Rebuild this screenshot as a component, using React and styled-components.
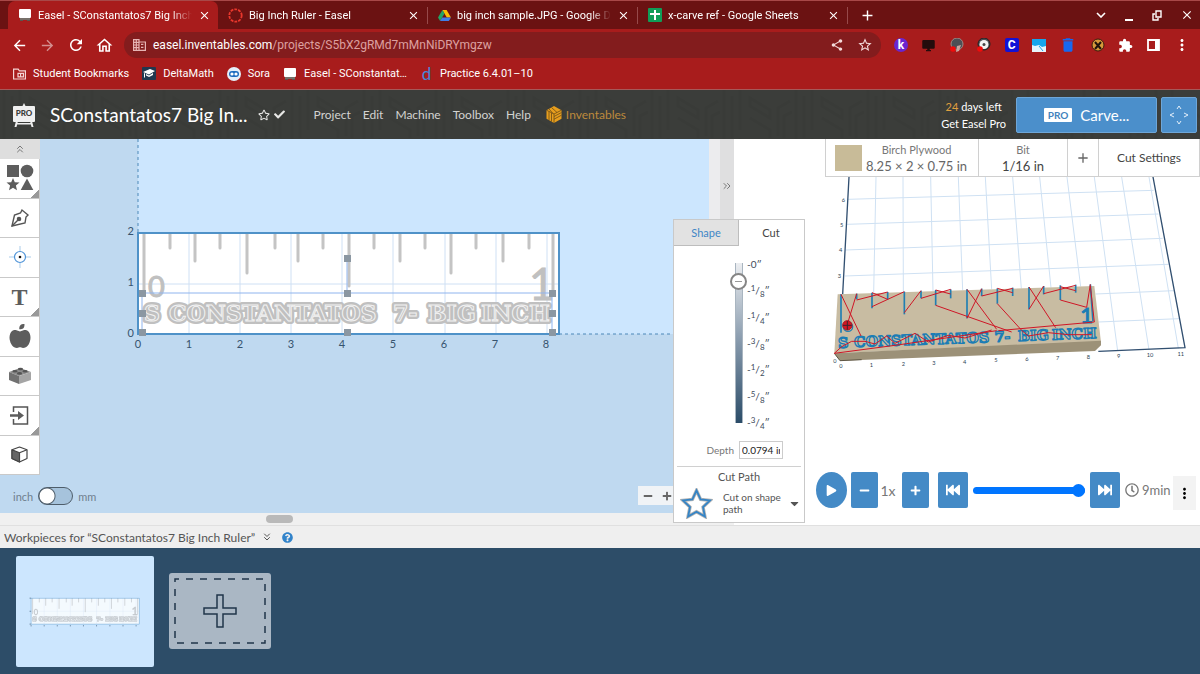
import React, { useId } from "react";
import styled, { createGlobalStyle, css } from "styled-components";
import { ChevronsDown, ChevronsRight, ChevronsUp } from "lucide-react";
import {
  MdAdd,
  MdArrowBack,
  MdArrowForward,
  MdClose,
  MdDelete,
  MdDesktopWindows,
  MdExtension,
  MdMoreVert,
  MdOutlineHome,
  MdRefresh,
  MdShare,
  MdStarBorder,
} from "react-icons/md";
import {
  FaAppleAlt,
  FaCaretDown,
  FaCheck,
  FaFastBackward,
  FaFastForward,
  FaMinus,
  FaPlay,
  FaPlus,
  FaQuestionCircle,
  FaRegClock,
  FaRegStar,
} from "react-icons/fa";

const GlobalStyle = createGlobalStyle`
  * {
    box-sizing: border-box;
  }

  body {
    margin: 0;
    background: #2d4d68;
    font-family: Lato, "Open Sans", sans-serif;
  }

  button {
    padding: 0;
    border: 0;
    background: none;
    color: inherit;
    font: inherit;
    cursor: pointer;
  }

  a {
    color: inherit;
    text-decoration: none;
  }

  svg {
    display: block;
    flex-shrink: 0;
  }
`;

/* ---------- small drawings ---------- */

const BoardIcon = () => (
  <svg width="14" height="14" viewBox="0 0 14 14">
    <path d="M2 11h10v2H9v-1H5v1H2z" fill="#5b5550" />
    <rect x="1" y="1" width="12" height="9" rx="1" fill="#fff" />
    <path d="M2 10h10v2H2z" fill="#77706a" />
  </svg>
);

const RingIcon = () => (
  <svg width="15" height="15" viewBox="0 0 15 15">
    <circle cx="7.5" cy="7.5" r="6.2" fill="none" stroke="#e8372c" strokeWidth="1.8" strokeDasharray="2.8 1.1" />
  </svg>
);

const DriveIcon = () => (
  <svg width="13" height="13" viewBox="0 0 13 13">
    <path d="M4.4 1h4.2L13 8.4H8.8z" fill="#fbbc05" />
    <path d="M4.4 1L0 8.4 2.1 12 6.5 4.6z" fill="#22a565" />
    <path d="M4.2 8.4H13L10.9 12H2.1z" fill="#3f7ee8" />
  </svg>
);

const SheetsIcon = () => (
  <svg width="14" height="14" viewBox="0 0 14 14">
    <rect width="14" height="14" rx="1" fill="#109d58" />
    <path d="M6 2h2v3h4v2H8v5H6V7H2V5h4z" fill="#fff" />
  </svg>
);

const BuildingIcon = () => (
  <svg width="13" height="12" viewBox="0 0 13 12" fill="none" stroke="#e6b4b4" strokeWidth="1.2">
    <path d="M.6.6H6v10.8H.6zM6 3h6.4v8.4H6M.6 3.4H6M.6 6H6M.6 8.6H6M3.3.6v10.8M8 5.4h2.4M8 8.4h2.4" />
  </svg>
);

const FolderIcon = () => (
  <svg width="13" height="12" viewBox="0 0 13 12" fill="none" stroke="#f3d4d4" strokeWidth="1.2">
    <path d="M.6 1.2h4.6l1.2 1.6h6v8.2H.6z" />
    <path d="M5 5.4h5.4v3.4H5zM7.6 5.4v3.4" />
  </svg>
);

const CapIcon = () => (
  <svg width="14" height="13" viewBox="0 0 14 13">
    <rect width="14" height="13" rx="1" fill="#20374f" />
    <path d="M1 5l7-3 5 2-6 3.4zM4 7l3 1.6L11 6v2L7 10 4 8.6zM2 6v4l1 1V6.4z" fill="#fff" />
  </svg>
);

const SoraIcon = () => (
  <svg width="14" height="14" viewBox="0 0 14 14">
    <circle cx="7" cy="7" r="7" fill="#e4effa" />
    <rect x="2" y="4" width="10" height="6" rx="3" fill="#1d6dc0" />
    <circle cx="5" cy="7" r="1.6" fill="#fff" />
    <circle cx="9" cy="7" r="1.6" fill="#fff" />
  </svg>
);

const RestoreIcon = () => (
  <svg width="10" height="11" viewBox="0 0 10 11" fill="none" stroke="#fff" strokeWidth="1.4">
    <path d="M4 1h5v6H4z" />
    <path d="M3 4H1v6h5V8" />
  </svg>
);

const SidePanelIcon = () => (
  <svg width="13" height="12" viewBox="0 0 13 12">
    <path d="M1 1h11v10H1z" fill="none" stroke="#fff" strokeWidth="1.8" />
    <path d="M8 1h4v10H8z" fill="#fff" />
  </svg>
);

const PlantIcon = ({ ring }) => (
  <svg width="14" height="14" viewBox="0 0 14 14">
    <circle cx="7" cy="6" r="6" fill="#4d4f55" stroke={ring ? "#222" : "#9a8a85"} />
    {ring ? (
      <>
        <circle cx="7" cy="6.5" r="4.5" fill="#f2f2f2" />
        <circle cx="7" cy="6.5" r="1.5" fill="#444" />
      </>
    ) : (
      <path d="M7 8l4-1-2 6-3 1z" fill="#c9a6a0" />
    )}
    <circle cx="3" cy="11" r="2.8" fill="#f10b0b" />
  </svg>
);

const PhotoIcon = () => (
  <svg width="14" height="13" viewBox="0 0 14 13">
    <rect width="14" height="13" fill="#e6f5fc" />
    <path d="M0 0h14v7l-4 1-3-2-4 1-3-1z" fill="#17a5ec" />
    <path d="M7 7l4 5" stroke="#17a5ec" />
  </svg>
);

const CrossBadgeIcon = () => (
  <svg width="14" height="14" viewBox="0 0 14 14">
    <circle cx="7" cy="7" r="6" fill="#d7993b" stroke="#3b1e0c" />
    <path d="M4 4l6 7M10 4l-6 7" stroke="#20130b" strokeWidth="2" />
  </svg>
);

const EaselLogo = () => (
  <svg width="24" height="24" viewBox="0 0 24 24">
    <path d="M12 0l2 4h-4zM4 18h2l-1.5 6h-2zM18 18h2l1.5 6h-2zM5 20h14v1.5H5z" fill="#eee" />
    <rect x="1" y="3" width="22" height="16" rx="1" fill="#f0f0f0" />
    <text x="12" y="13" textAnchor="middle" fontFamily="Lato, sans-serif" fontWeight="900" fontSize="8" fill="#3a3c39">
      PRO
    </text>
  </svg>
);

const InventablesLogo = () => (
  <svg width="16" height="17" viewBox="0 0 16 17">
    <path d="M8 0l7.5 4.2v8.5L8 17 .5 12.7V4.2z" fill="#e79e1d" />
    <path
      d="M8 8v9M8 8L.5 4.2M8 8l7.5-3.8M3 5.5v8.7M5.5 7v8.7M8 10.500l7.5-4M8 13.2l7.5-4M5.5 1.5l5.5 5M3 3l4 4.5"
      stroke="#6b4b18"
      strokeWidth=".8"
      fill="none"
    />
  </svg>
);

const ShapesIcon = () => (
  <svg width="28" height="28" viewBox="0 0 28 28" fill="#5d5d5d">
    <rect x="1" y="1" width="12" height="12" />
    <circle cx="21" cy="7" r="6.3" />
    <path d="M7 14l1.800 4.200 4.700.4-3.600 3 1.100 4.600L7 23.800 3 26.200l1.100-4.600-3.600-3 4.700-.4z" />
    <path d="M21 14.5L27.3 26H14.7z" />
  </svg>
);

const PenIcon = () => (
  <svg width="20" height="20" viewBox="0 0 20 20" fill="none" stroke="#555" strokeWidth="1.4">
    <path d="M2 18L4.5 7l6-2L12 2l6 5-2 2-1 6z" />
    <path d="M2 18l6-6" />
    <circle cx="9" cy="11" r="1.6" fill="#555" />
  </svg>
);

const TargetIcon = () => (
  <svg width="22" height="22" viewBox="0 0 22 22" fill="none">
    <path d="M11 0v5M11 17v5M0 11h5M17 11h5" stroke="#a9cbe9" />
    <circle cx="11" cy="11" r="5.5" stroke="#4f94d8" strokeWidth="1.2" />
    <circle cx="11" cy="11" r="1.3" fill="#111" />
  </svg>
);

const BrickIcon = () => (
  <svg width="22" height="17" viewBox="0 0 22 17">
    <path d="M0 5l11-4 11 4-12 4z" fill="#8d8d8d" />
    <path d="M0 5l10 4v8L0 13z" fill="#717171" />
    <path d="M10 9l12-4v8l-12 4z" fill="#a5a5a5" />
    <g fill="#555">
      <ellipse cx="6" cy="4.2" rx="2.6" ry="1.3" />
      <ellipse cx="11.5" cy="2" rx="2.6" ry="1.3" />
      <ellipse cx="16" cy="4.2" rx="2.6" ry="1.3" />
      <ellipse cx="10.5" cy="6.4" rx="2.6" ry="1.3" />
    </g>
  </svg>
);

const ImportIcon = () => (
  <svg width="19" height="19" viewBox="0 0 19 19">
    <path d="M3.5 6V1h14v17h-14v-5" fill="none" stroke="#555" strokeWidth="1.5" />
    <path d="M0 8.2h8V5l6 4.5L8 14v-3.2H0z" fill="#5d5d5d" />
  </svg>
);

const CubeIcon = () => (
  <svg width="17" height="17" viewBox="0 0 17 17" stroke="#444" strokeWidth="1.2" strokeLinejoin="round">
    <path d="M8.5 1L16 3.8v8.7L8.5 16 1 12.5V3.8z" fill="#fff" />
    <path d="M1 3.8l7.5 3V16L1 12.5z" fill="#666" />
    <path d="M8.5 6.8L16 3.8" fill="none" />
  </svg>
);

const StarPathIcon = () => (
  <svg width="33" height="31" viewBox="0 0 33 31">
    <path
      d="M16.5 2.5l4.1 8.9 9.4 1-7 6.6 1.9 9.5-8.4-4.7-8.4 4.7L10 19l-7-6.600 9.400-1z"
      fill="#fff"
      stroke="#b5b5b5"
      strokeWidth="3.4"
    />
    <path
      d="M16.5 2.5l4.1 8.9 9.4 1-7 6.6 1.9 9.5-8.4-4.7-8.4 4.7L10 19l-7-6.600 9.400-1z"
      fill="none"
      stroke="#3484c6"
      strokeWidth="1.8"
    />
  </svg>
);

const AddDrawing = () => (
  <svg width="92" height="66" viewBox="0 0 92 66" fill="none" stroke="#20364a">
    <rect x="1" y="1" width="90" height="64" strokeWidth="1.5" strokeDasharray="7 7" strokeDashoffset="3" />
    <path d="M43 17h6v13h13v6H49v13h-6V36H30v-6h13z" strokeWidth="1.5" />
  </svg>
);

const HeaderPattern = () => (
  <Pattern aria-hidden="true" width="100%" height="100%">
    <defs>
      <pattern id="chevrons" width="72" height="48" patternUnits="userSpaceOnUse">
        <path
          d="M4 0v48M12 6v42M20 0v40M30 8l20 12v8L30 16zM30 28l20 12v8M58 46V18l12-7M64 48V26l8-4"
          fill="none"
          stroke="#333532"
          strokeWidth="3"
        />
      </pattern>
    </defs>
    <rect width="100%" height="100%" fill="url(#chevrons)" opacity="0.3" />
  </Pattern>
);

/* ---------- ruler drawing, one inch is 51 units ---------- */

const TICKS = [
  [6, 60], [32, 14], [57, 27], [82, 14], [109, 39], [137, 14], [160, 27], [185, 14],
  [211, 52], [236, 14], [262, 27], [287, 14], [313, 39], [338, 14], [365, 27], [391, 14], [415, 60],
];

const WORDS = [
  [6, "S"],
  [31, "CONSTANTATOS"],
  [255, "7-"],
  [290, "BIG"],
  [343, "INCH"],
];

const HANDLES = [
  [209, 25], [4, 60], [209, 60], [414, 60], [4, 80], [414, 80], [4, 99], [209, 99], [414, 99],
];

const Ruler = ({ selected }) => {
  const lettersId = useId();

  return (
    <g>
      <rect width="421" height="101" fill="#fff" />
      <path
        d="M51 0v101M102 0v101M153 0v101M204 0v101M255 0v101M307 0v101M358 0v101M409 0v101M0 51h421"
        stroke="#cfe0f4"
      />
      {TICKS.map(([x, length]) => (
        <path key={x} d={`M${x} 1v${length}`} stroke="#c4c4c4" strokeWidth="3" strokeLinecap="round" />
      ))}
      <g fill="#c0c0c0" fontFamily="Lato, sans-serif">
        <text x="10" y="64" fontSize="29" stroke="#c0c0c0">0</text>
        <text x="391" y="67" fontSize="44" stroke="#c0c0c0">1</text>
      </g>
      {/* thick outline first, then the same letters with a thin light line */}
      <g
        fill="#c0c0c0"
        stroke="#c0c0c0"
        strokeWidth="6"
        strokeLinejoin="round"
        fontFamily='"DejaVu Serif", serif'
        fontWeight="bold"
        fontSize="22"
      >
        <g id={lettersId}>
          {WORDS.map(([x, word]) => (
            <text key={word} x={x} y="88">{word}</text>
          ))}
        </g>
      </g>
      <g fontFamily='"DejaVu Serif", serif' fontWeight="bold" fontSize="22" fill="#c0c0c0" stroke="#f2f2f2" strokeWidth="1">
        <use href={`#${lettersId}`} />
      </g>
      {selected && <path d="M4 99V60h410v39M209 60V25" fill="none" stroke="#8fb4ee" />}
      <rect width="421" height="101" fill="none" stroke="#4f92c8" strokeWidth="2" />
      {selected &&
        HANDLES.map(([x, y]) => (
          <rect key={`${x}-${y}`} x={x - 3} y={y - 3} width="7" height="7" fill="#8b97a2" />
        ))}
    </g>
  );
};

const DesignCanvas = () => (
  <CanvasDrawing width="100%" height="100%" role="img" aria-label="Design canvas">
    <rect width="100%" height="100%" fill="#bfd9f0" />
    <rect x="98" width="100%" height="195" fill="#cce6fe" />
    <g stroke="#4d88b8" strokeDasharray="3 3">
      <path d="M98 0v93" />
      <line x1="519" y1="195" x2="100%" y2="195" />
    </g>
    <g transform="translate(98 94)">
      <Ruler selected />
    </g>
    <g fill="#36536e" fontFamily="Lato, sans-serif" fontSize="11">
      {[2, 1, 0].map((n, i) => (
        <text key={n} x="94" y={96 + i * 51} textAnchor="end">{n}</text>
      ))}
      {[0, 1, 2, 3, 4, 5, 6, 7, 8].map(n => (
        <text key={n} x={98 + n * 51} y="209" textAnchor="middle">{n}</text>
      ))}
    </g>
  </CanvasDrawing>
);

/* ---------- 3d preview ---------- */

const GRID_LINES = [
  "M183 123L176 470", "M264 123L265 468", "M347 123L354 466", "M430 123L443 463", "M511 123L530 460",
  "M593 123L619 458", "M674 123L708 455", "M756 123L797 452", "M838 123L908 645", "M920 123L1002 642",
  "M1002 123L1090 637", "M99 190L1016 163", "M96 265L1030 234", "M93 342L1043 307", "M90 420L1060 385",
  "M842 474L1076 464", "M850 558L1092 548",
];

const CUTS = [
  [78, 475, 590], [125, 473, 490], [171, 470, 517], [218, 468, 490], [268, 467, 535], [318, 464, 487],
  [362, 462, 508], [407, 460, 487], [456, 460, 547], [500, 458, 480], [547, 457, 503], [593, 455, 480],
  [642, 453, 520], [686, 450, 475], [736, 448, 492], [782, 446, 470],
];

const MOVES = [
  "M78 475L138 600", "M125 473L100 555", "M125 492L218 468", "M171 470L218 490", "M171 512L268 467",
  "M268 530L318 464", "M318 487L407 460", "M362 462L407 474", "M362 508L456 541L590 588", "M456 460L545 580",
  "M456 547L500 458", "M500 480L593 457", "M547 457L593 470", "M547 503L620 583", "M642 453L722 575",
  "M642 520L686 450", "M686 473L782 448", "M736 452L782 464", "M736 492L815 514L826 445", "M826 450L838 558",
  "M838 558L550 584", "M58 652L80 632L110 616H150L180 624L215 600L240 622L300 592L340 618L400 598L450 606L530 582",
  "M58 652L240 628L420 602L545 584", "M620 583L640 600L700 590L760 596H830",
];

const SCENE_WORDS = [
  [70, 636, "S"],
  [118, 633, "CONSTANTATOS"],
  [539, 618, "7-"],
  [609, 615, "BIG"],
  [711, 611, "INCH"],
];

const Scene = () => (
  <SceneDrawing viewBox="33 123 1122 600" role="img" aria-label="Carving preview">
    <path d={GRID_LINES.join("")} stroke="#cfe1f3" strokeWidth="3" />
    <path d="M102 123L83 475M1014 123L1110 635L850 646" fill="none" stroke="#314f70" strokeWidth="4" />
    <path d="M68 475L838 450L858 618L58 652z" fill="#c8bca2" />
    <path d="M58 652L858 614V628L840 645L75 674z" fill="#9c9178" />
    <path d="M58 652L75 674L140 671" fill="none" stroke="#5d5543" strokeWidth="3" />
    <g stroke="#207fb3" strokeWidth="5">
      {CUTS.map(([x, top, bottom]) => (
        <path key={x} d={`M${x} ${top}V${bottom}`} />
      ))}
      <path d="M826 445L834 556" />
    </g>
    <g
      fill="#c8bca2"
      stroke="#1b7db5"
      strokeWidth="4"
      strokeLinejoin="round"
      fontFamily='"DejaVu Serif", serif'
      fontWeight="bold"
      fontSize="43"
    >
      {SCENE_WORDS.map(([x, y, word]) => (
        <text key={word} x={x} y={y} transform={`rotate(-2 ${x} ${y})`}>{word}</text>
      ))}
    </g>
    <text x="796" y="562" fill="#1b7db5" stroke="#1b7db5" strokeWidth="3" fontFamily="Lato, sans-serif" fontSize="66">1</text>
    <path d={MOVES.join("")} fill="none" stroke="#cf1626" strokeWidth="3" />
    <circle cx="99" cy="572" r="14" fill="none" stroke="#207fb3" strokeWidth="4" />
    <circle cx="97" cy="568" r="14" fill="#d21823" stroke="#b01320" strokeWidth="3" />
    <path d="M84 568h26M97 555v26" stroke="#3b2330" strokeWidth="3" />
    <g fill="#2b3f55" fontFamily="Lato, sans-serif" fontSize="17">
      {[[60, 680, 0], [78, 696, 0], [169, 693, 1], [265, 691, 2], [357, 686, 3], [449, 683, 4], [543, 678, 5],
        [636, 675, 6], [728, 672, 7], [820, 670, 8], [911, 666, 9], [1005, 662, 10], [1097, 660, 11],
        [85, 197, 6], [80, 273, 5], [77, 347, 4], [73, 425, 3]].map(([x, y, label]) => (
        <text key={`${x}-${y}`} x={x} y={y} textAnchor="middle">{label}</text>
      ))}
    </g>
  </SceneDrawing>
);

/* ---------- data ---------- */

const tabs = [
  { title: "Easel - SConstantatos7 Big Inch", icon: <BoardIcon />, active: true },
  { title: "Big Inch Ruler - Easel", icon: <RingIcon /> },
  { title: "big inch sample.JPG - Google Dr", icon: <DriveIcon /> },
  { title: "x-carve ref - Google Sheets", icon: <SheetsIcon /> },
];

const bookmarks = [
  { title: "Student Bookmarks", icon: <FolderIcon /> },
  { title: "DeltaMath", icon: <CapIcon /> },
  { title: "Sora", icon: <SoraIcon /> },
  { title: "Easel - SConstantat…", icon: <BoardIcon /> },
];

const tools = [
  { label: "Shapes", icon: <ShapesIcon />, more: true },
  { label: "Pen", icon: <PenIcon /> },
  { label: "Drill point", icon: <TargetIcon /> },
  { label: "Text", more: true },
  { label: "Icons", icon: <FaAppleAlt size={24} color="#5d5d5d" /> },
  { label: "Apps", icon: <BrickIcon /> },
  { label: "Import", icon: <ImportIcon />, more: true },
  { label: "3D", icon: <CubeIcon /> },
];

const depths = ["0", "1/8", "1/4", "3/8", "1/2", "5/8", "3/4"];

/* ---------- sections ---------- */

const BrowserChrome = () => (
  <Chrome>
    <TabStrip>
      {tabs.map(tab => (
        <Tab key={tab.title} $active={tab.active}>
          {tab.icon}
          <TabTitle>{tab.title}</TabTitle>
          <button aria-label="Close tab"><MdClose size={13} /></button>
        </Tab>
      ))}
      <NewTab aria-label="New tab"><MdAdd size={17} /></NewTab>
      <WindowButtons>
        <button aria-label="Search tabs">
          <svg width="10" height="6" viewBox="0 0 10 6" fill="none" stroke="#fff" strokeWidth="1.6"><path d="M1 1l4 4 4-4" /></svg>
        </button>
        <button aria-label="Minimize">
          <svg width="10" height="11" viewBox="0 0 10 11"><path d="M1 9h8v2H1z" fill="#fff" /></svg>
        </button>
        <button aria-label="Restore"><RestoreIcon /></button>
        <button aria-label="Close"><MdClose size={14} /></button>
      </WindowButtons>
    </TabStrip>
    <AddressRow>
      <NavButton aria-label="Back"><MdArrowBack size={17} /></NavButton>
      <NavButton aria-label="Forward" $dim><MdArrowForward size={17} /></NavButton>
      <NavButton aria-label="Reload"><MdRefresh size={18} /></NavButton>
      <NavButton aria-label="Home"><MdOutlineHome size={19} /></NavButton>
      <Omnibox>
        <BuildingIcon />
        <Url>easel.inventables.com<span>/projects/S5bX2gRMd7mMnNiDRYmgzw</span></Url>
        <button aria-label="Share"><MdShare size={14} /></button>
        <button aria-label="Bookmark"><MdStarBorder size={16} /></button>
      </Omnibox>
      <Extensions>
        <Badge $bg="#6a25cf" $round>k</Badge>
        <MdDesktopWindows size={15} color="#240c0c" />
        <PlantIcon />
        <PlantIcon ring />
        <Badge $bg="#1212d6">C</Badge>
        <PhotoIcon />
        <MdDelete size={18} color="#1668f0" />
        <CrossBadgeIcon />
        <MdExtension size={15} />
        <SidePanelIcon />
        <MdMoreVert size={18} />
      </Extensions>
    </AddressRow>
    <BookmarkRow>
      {bookmarks.map(item => (
        <Bookmark href="#" key={item.title}>{item.icon}{item.title}</Bookmark>
      ))}
      <Bookmark href="#"><Delta>d</Delta>Practice 6.4.01–10</Bookmark>
    </BookmarkRow>
  </Chrome>
);

const AppHeader = () => (
  <Header>
    <HeaderPattern />
    <EaselLogo />
    <ProjectName>SConstantatos7 Big In...</ProjectName>
    <FaRegStar size={12} />
    <SavedMark><FaCheck size={11} /></SavedMark>
    <Menu>
      {["Project", "Edit", "Machine", "Toolbox", "Help"].map(item => (
        <button key={item}>{item}</button>
      ))}
      <BrandLink href="#"><InventablesLogo />Inventables</BrandLink>
    </Menu>
    <Trial>
      <div><b>24</b> days left</div>
      <a href="#">Get Easel Pro</a>
    </Trial>
    <CarveButton><ProTag>PRO</ProTag>Carve...</CarveButton>
    <JogButton aria-label="Jog machine">
      <svg width="18" height="18" viewBox="0 0 18 18" fill="none" stroke="#e3effa">
        <path d="M7 3l2-3 2 3M7 15l2 3 2-3M4 7L0 9l4 2M14 7l4 2-4 2" />
      </svg>
    </JogButton>
  </Header>
);

const CutPanel = () => (
  <Panel>
    <PanelTabs>
      <PanelTab>Shape</PanelTab>
      <PanelTab $active>Cut</PanelTab>
    </PanelTabs>
    <DepthArea>
      <DepthRange type="range" min="0" max="750" defaultValue="50" aria-label="Cut depth" />
      <DepthLabels>
        {depths.map(depth => {
          const [top, bottom] = depth.split("/");
          return (
            <li key={depth}>
              -{bottom ? <><sup>{top}</sup>/<sub>{bottom}</sub></> : top}″
            </li>
          );
        })}
      </DepthLabels>
    </DepthArea>
    <DepthField>
      Depth
      <input type="text" defaultValue="0.0794 in" />
    </DepthField>
    <CutPath>
      <h3>Cut Path</h3>
      <CutPathButton>
        <StarPathIcon />
        <span>Cut on shape path</span>
        <FaCaretDown size={13} />
      </CutPathButton>
    </CutPath>
  </Panel>
);

const Preview = () => (
  <PreviewPane>
    <MaterialBar>
      <MaterialButton>
        <Swatch />
        <Setting><small>Birch Plywood</small>8.25 × 2 × 0.75 in</Setting>
      </MaterialButton>
      <BitButton><Setting><small>Bit</small><strong>1/16 in</strong></Setting></BitButton>
      <AddBit aria-label="Add bit"><MdAdd size={16} /></AddBit>
      <SettingsButton>Cut Settings</SettingsButton>
    </MaterialBar>
    <Scene />
    <Playback>
      <PlayButton aria-label="Play"><FaPlay size={11} /></PlayButton>
      <StepButton aria-label="Slower"><FaMinus size={11} /></StepButton>
      <Speed>1x</Speed>
      <StepButton aria-label="Faster"><FaPlus size={11} /></StepButton>
      <SkipButton aria-label="To start"><FaFastBackward size={14} /></SkipButton>
      <Timeline type="range" min="0" max="100" defaultValue="100" aria-label="Simulation time" />
      <SkipButton aria-label="To end"><FaFastForward size={14} /></SkipButton>
      <Duration><FaRegClock size={14} />9min</Duration>
      <MoreButton aria-label="More"><MdMoreVert size={17} /></MoreButton>
    </Playback>
    <CutPanel />
  </PreviewPane>
);

const App = () => (
  <Page>
    <GlobalStyle />
    <BrowserChrome />
    <AppHeader />
    <Workspace>
      <Editor>
        <ToolColumn>
          <CollapseButton aria-label="Collapse tools"><ChevronsUp size={12} /></CollapseButton>
          <ToolList>
            {tools.map(tool => (
              <ToolButton key={tool.label} aria-label={tool.label} $more={tool.more}>
                {tool.icon || <TypeGlyph>T</TypeGlyph>}
              </ToolButton>
            ))}
          </ToolList>
        </ToolColumn>
        <CanvasArea><DesignCanvas /></CanvasArea>
        <VerticalTrack />
        <UnitSwitch>
          inch
          <input type="checkbox" role="switch" aria-label="Use millimetres" />
          mm
        </UnitSwitch>
        <ZoomButtons>
          <button aria-label="Zoom out"><FaMinus size={10} /></button>
          <button aria-label="Zoom in"><FaPlus size={10} /></button>
        </ZoomButtons>
      </Editor>
      <Divider aria-label="Collapse preview"><ChevronsRight size={12} /></Divider>
      <HorizontalTrack><span /></HorizontalTrack>
      <Preview />
    </Workspace>
    <WorkpieceBar>
      Workpieces for “SConstantatos7 Big Inch Ruler”
      <ChevronsDown size={12} />
      <FaQuestionCircle size={11} color="#3183ca" />
    </WorkpieceBar>
    <Tray>
      <Workpiece aria-label="Workpiece 1">
        <svg width="114" height="36" viewBox="-12 -20 444 140">
          <g opacity="0.8"><Ruler /></g>
          <path d="M-6 0h6M-6 51h6M-6 101h6M0 105v5M51 105v5M102 105v5M153 105v5M204 105v5M255 105v5M307 105v5M358 105v5M409 105v5" stroke="#5b7790" strokeWidth="3" />
        </svg>
      </Workpiece>
      <AddWorkpiece aria-label="Add workpiece"><AddDrawing /></AddWorkpiece>
    </Tray>
  </Page>
);

/* ---------- page ---------- */

const Page = styled.div`
  display: flex;
  flex-direction: column;
  min-height: 100vh;
`;

const Chrome = styled.header`
  border-top: 1px solid #a84848;
  border-bottom: 1px solid #a55a5a;
  background: #a81c1c;
  color: #fff;
  font-family: Roboto, sans-serif;
  font-size: 11px;
`;

const TabStrip = styled.div`
  display: flex;
  align-items: center;
  height: 28px;
  padding-left: 8px;
  background: #6b1212;
`;

const Tab = styled.div`
  display: flex;
  align-items: center;
  gap: 6px;
  flex: 0 1 210px;
  min-width: 0;
  height: 28px;
  padding: 0 7px 0 10px;

  & + & {
    border-right: 1px solid #96494a;
    height: 17px;
  }

  ${props =>
    props.$active &&
    css`
      border-radius: 7px 7px 0 0;
      background: #a81c1c;
    `}
`;

const TabTitle = styled.span`
  flex: 1;
  overflow: hidden;
  line-height: 15px;
  white-space: nowrap;
  mask-image: linear-gradient(to right, #000 86%, transparent);
`;

const NewTab = styled.button`
  margin-left: 11px;
`;

const WindowButtons = styled.div`
  display: flex;
  align-items: center;
  gap: 18px;
  margin-left: auto;
  padding-right: 6px;
`;

const AddressRow = styled.div`
  display: flex;
  align-items: center;
  gap: 10px;
  height: 32px;
  padding: 0 9px 0 11px;
`;

const NavButton = styled.button`
  width: 18px;
  opacity: ${props => (props.$dim ? 0.5 : 1)};
`;

const Omnibox = styled.div`
  display: flex;
  flex: 1;
  align-items: center;
  gap: 13px;
  height: 26px;
  margin-left: 1px;
  padding: 0 8px 0 9px;
  border-radius: 13px;
  background: #831c1d;
  color: #f4dada;
`;

const Url = styled.span`
  flex: 1;
  margin-left: -6px;
  color: #fff;
  font-size: 12px;

  span {
    color: #dda0a0;
  }
`;

const Extensions = styled.div`
  display: flex;
  align-items: center;
  justify-content: space-between;
  width: 300px;
  padding-left: 3px;
`;

const Badge = styled.span`
  width: 14px;
  height: 14px;
  border-radius: ${props => (props.$round ? "50%" : "2px")};
  background: ${props => props.$bg};
  font-size: 12px;
  font-weight: bold;
  line-height: 14px;
  text-align: center;
`;

const BookmarkRow = styled.nav`
  display: flex;
  align-items: center;
  gap: 13px;
  height: 28px;
  padding: 0 13px 3px;
`;

const Bookmark = styled.a`
  display: flex;
  align-items: center;
  gap: 7px;
`;

const Delta = styled.span`
  width: 13px;
  color: #4586d8;
  font-family: Lato, sans-serif;
  font-size: 17px;
  line-height: 17px;
  text-align: center;
`;

/* ---------- app header ---------- */

const Header = styled.header`
  position: relative;
  display: flex;
  align-items: center;
  height: 49px;
  padding: 0 3px 0 12px;
  background: #3b3d3a;
  color: #e8e8e6;

  > * {
    z-index: 1;
  }
`;

const Pattern = styled.svg`
  position: absolute;
  inset: 0;
  z-index: 0;
`;

const ProjectName = styled.h1`
  margin: 0 10px 0 14px;
  color: #fff;
  font-size: 19px;
  font-weight: 400;
  white-space: nowrap;
`;

const SavedMark = styled.span`
  margin-left: 4px;
`;

const Menu = styled.nav`
  display: flex;
  gap: 12px;
  margin-left: 29px;
  color: #d3d3d1;
  font-size: 12px;
`;

const BrandLink = styled.a`
  display: flex;
  align-items: center;
  gap: 4px;
  margin-left: 3px;
  color: #bd8a3c;
`;

const Trial = styled.div`
  margin-left: auto;
  color: #fff;
  font-size: 11px;
  line-height: 17px;
  text-align: center;

  b {
    color: #e0a03f;
    font-weight: 400;
  }
`;

const CarveButton = styled.button`
  display: flex;
  align-items: center;
  justify-content: center;
  gap: 8px;
  width: 141px;
  height: 36px;
  margin: 0 4px 0 10px;
  border: 1px solid #6ea6d8;
  border-radius: 2px;
  background: #4b8fcb;
  color: #fff;
  font-size: 15px;
`;

const ProTag = styled.span`
  padding: 0 4px;
  border-radius: 1px;
  background: #fff;
  color: #4283bd;
  font-size: 10px;
  font-weight: 700;
  line-height: 14px;
`;

const JogButton = styled(CarveButton)`
  width: 36px;
  margin: 0;
`;

/* ---------- editor ---------- */

const Workspace = styled.main`
  display: grid;
  flex: 1;
  grid-template-columns: minmax(0, 1fr) 14px minmax(466px, 38%);
  grid-template-rows: minmax(374px, 1fr) 12px;
`;

const Editor = styled.section`
  position: relative;
  display: flex;
  background: #bfd9f0;
`;

const ToolColumn = styled.div`
  width: 40px;
`;

const CollapseButton = styled.button`
  display: flex;
  align-items: center;
  justify-content: center;
  width: 100%;
  height: 20px;
  background: #dedede;
  color: #777;
`;

const ToolList = styled.div`
  display: grid;
  grid-auto-rows: 1fr;
  height: 316px;
`;

const ToolButton = styled.button`
  display: flex;
  align-items: center;
  justify-content: center;
  border-right: 1px solid #c9c9c9;
  border-bottom: 1px solid #c9c9c9;
  background: #fff;

  ${props =>
    props.$more &&
    css`
      background: linear-gradient(135deg, transparent 50%, #999 50%) right bottom / 8px 8px no-repeat #fff;
    `}
`;

const TypeGlyph = styled.span`
  color: #5d5d5d;
  font-family: "Liberation Serif", serif;
  font-size: 24px;
  font-weight: bold;
  line-height: 24px;
`;

const CanvasArea = styled.div`
  flex: 1;
  min-width: 0;
`;

const CanvasDrawing = styled.svg`
  height: 100%;
`;

const VerticalTrack = styled.div`
  width: 11px;
  background: #ececee;
`;

const UnitSwitch = styled.label`
  position: absolute;
  bottom: 8px;
  left: 13px;
  display: flex;
  align-items: center;
  gap: 5px;
  color: #6f7f8e;
  font-size: 11px;

  input {
    width: 35px;
    height: 18px;
    margin: 0;
    border: 1px solid #4e5d6a;
    border-radius: 9px;
    appearance: none;
    background: radial-gradient(circle at 8px 8px, #fff 7px, #4e5d6a 8px, #a6c3dc 9px);
  }
`;

const ZoomButtons = styled.div`
  position: absolute;
  right: 42px;
  bottom: 8px;
  display: flex;
  align-items: center;
  gap: 9px;
  width: 40px;
  height: 19px;
  padding-left: 5px;
  background: #f0f3f6;
  color: #666;
`;

const Divider = styled.button`
  display: flex;
  align-items: center;
  justify-content: center;
  padding-bottom: 280px;
  background: #dfdfe0;
  color: #777;
`;

const HorizontalTrack = styled.div`
  grid-row: 2;
  grid-column: 1 / 3;
  background: #f0f0f0;

  span {
    display: block;
    width: 27px;
    height: 8px;
    margin: 2px 0 0 266px;
    border-radius: 4px;
    background: #b9b9b9;
  }
`;

/* ---------- preview ---------- */

const PreviewPane = styled.section`
  position: relative;
  display: flex;
  flex-direction: column;
  grid-row: 1 / 3;
  grid-column: 3;
  background: #fff;
`;

const MaterialBar = styled.div`
  display: flex;
  align-self: flex-end;
  height: 38px;
  border: 1px solid #d0d0d0;
  border-top: 0;
  background: #fff;
  color: #666;
`;

const MaterialButton = styled.button`
  display: flex;
  align-items: center;
  gap: 4px;
  width: 152px;
  padding-left: 9px;
`;

const BitButton = styled.button`
  width: 89px;
  border-left: 1px solid #d0d0d0;
`;

const AddBit = styled.button`
  display: flex;
  align-items: center;
  justify-content: center;
  width: 31px;
  border-left: 1px solid #d0d0d0;
`;

const SettingsButton = styled.button`
  width: 101px;
  border-left: 1px solid #d0d0d0;
  color: #444;
  font-size: 12px;
`;

const Swatch = styled.span`
  width: 27px;
  height: 26px;
  background: #c8bb98;
`;

const Setting = styled.span`
  display: flex;
  flex-direction: column;
  font-size: 13px;
  line-height: 17px;
  text-align: center;

  small {
    color: #777;
    font-size: 11px;
  }

  strong {
    color: #444;
    font-weight: 400;
  }
`;

const SceneDrawing = styled.svg`
  align-self: flex-end;
  width: 374px;
  height: 200px;
`;

const Playback = styled.div`
  display: flex;
  align-items: center;
  margin-top: auto;
  padding: 0 4px 15px 82px;
`;

const PlayButton = styled.button`
  display: flex;
  align-items: center;
  justify-content: center;
  width: 31px;
  height: 36px;
  border-radius: 50%;
  background: #448ac6;
  color: #fff;
`;

const StepButton = styled(PlayButton)`
  width: 27px;
  margin-left: 4px;
  border-radius: 2px;
`;

const SkipButton = styled(StepButton)`
  width: 30px;
  margin-left: 9px;

  input + & {
    margin-left: 5px;
  }
`;

const Speed = styled.span`
  width: 20px;
  color: #777;
  font-size: 14px;
  text-align: center;
`;

const Timeline = styled.input`
  flex: 1;
  min-width: 0;
  height: 7px;
  margin: 0 0 0 5px;
  border-radius: 4px;
  appearance: none;
  background: #0075ff;

  &::-webkit-slider-thumb {
    width: 13px;
    height: 13px;
    border-radius: 50%;
    appearance: none;
    background: #0075ff;
  }
`;

const Duration = styled.span`
  display: flex;
  align-items: center;
  gap: 3px;
  width: 48px;
  margin-left: 5px;
  color: #777;
  font-size: 13px;
`;

const MoreButton = styled(PlayButton)`
  width: 23px;
  height: 34px;
  margin: 6px 0 0;
  border-radius: 0;
  background: #f3f3f3;
  color: #000;
`;

/* ---------- cut panel ---------- */

const Panel = styled.aside`
  position: absolute;
  bottom: 2px;
  left: -61px;
  width: 132px;
  border: 1px solid #c9c9c9;
  background: #fff;
  color: #555;
  font-size: 11px;
`;

const PanelTabs = styled.div`
  display: flex;
  height: 26px;
`;

const PanelTab = styled.button`
  flex: 1;
  border-right: 1px solid #bdbdbd;
  border-bottom: 1px solid #bdbdbd;
  background: #e2e2e2;
  color: #4086c6;

  ${props =>
    props.$active &&
    css`
      border-color: transparent;
      background: #fff;
      color: #444;
    `}
`;

const DepthArea = styled.div`
  display: flex;
  padding: 17px 0 0 56px;
`;

const DepthRange = styled.input`
  width: 17px;
  height: 160px;
  margin: 0;
  appearance: none;
  writing-mode: vertical-lr;
  background: linear-gradient(to right, #a9b5c0 1px, transparent 1px 7px, #a9b5c0 7px) center / 8px 160px no-repeat,
    linear-gradient(#eceef1, #8598ab 50%, #2b4c68) center / 8px 160px no-repeat;

  &::-webkit-slider-thumb {
    width: 17px;
    height: 17px;
    border: 2px solid #858585;
    border-radius: 50%;
    appearance: none;
    background: linear-gradient(#999, #999) center / 7px 1px no-repeat #fff;
  }
`;

const DepthLabels = styled.ul`
  display: flex;
  flex-direction: column;
  justify-content: space-between;
  height: 172px;
  margin: -6px 0;
  padding: 0;
  color: #3c4a5a;
  font-size: 10px;
  line-height: 14px;
  list-style: none;

  sup,
  sub {
    font-size: 8px;
    line-height: 0;
  }

  sup {
    vertical-align: 3px;
  }

  sub {
    vertical-align: -3px;
  }
`;

const DepthField = styled.label`
  display: flex;
  align-items: center;
  justify-content: flex-end;
  gap: 5px;
  margin-top: 18px;
  padding-right: 21px;
  color: #777;
  font-size: 10px;

  input {
    width: 44px;
    height: 18px;
    padding: 0 2px;
    border: 1px solid #ccc;
    color: #222;
    font: 10px Lato, sans-serif;
  }
`;

const CutPath = styled.div`
  margin: 7px 3px 0;
  border-top: 1px solid #d0d0d0;

  h3 {
    margin: 3px 0 0;
    font-size: 11px;
    font-weight: 400;
    line-height: 14px;
    text-align: center;
  }
`;

const CutPathButton = styled.button`
  display: grid;
  grid-template-columns: 33px 1fr 13px;
  align-items: center;
  width: 100%;
  height: 38px;
  padding-left: 3px;
  font-size: 10px;
  line-height: 12px;
  text-align: left;

  span {
    padding-left: 10px;
  }
`;

/* ---------- workpieces ---------- */

const WorkpieceBar = styled.div`
  display: flex;
  align-items: center;
  gap: 6px;
  height: 23px;
  padding-left: 4px;
  border-top: 1px solid #e0e0e0;
  background: #efefef;
  color: #555;
  font-size: 12px;

  svg + svg {
    margin-left: 3px;
  }
`;

const Tray = styled.section`
  display: flex;
  align-items: center;
  gap: 15px;
  height: 126px;
  padding: 0 16px;
  background: #2d4d68;
`;

const Workpiece = styled.button`
  display: flex;
  align-items: center;
  justify-content: center;
  width: 138px;
  height: 111px;
  border-radius: 2px;
  background: #cce6fe;
`;

const AddWorkpiece = styled.button`
  width: 102px;
  height: 76px;
  padding: 5px;
  border-radius: 3px;
  background: #aab7c4;
`;

export default App;
